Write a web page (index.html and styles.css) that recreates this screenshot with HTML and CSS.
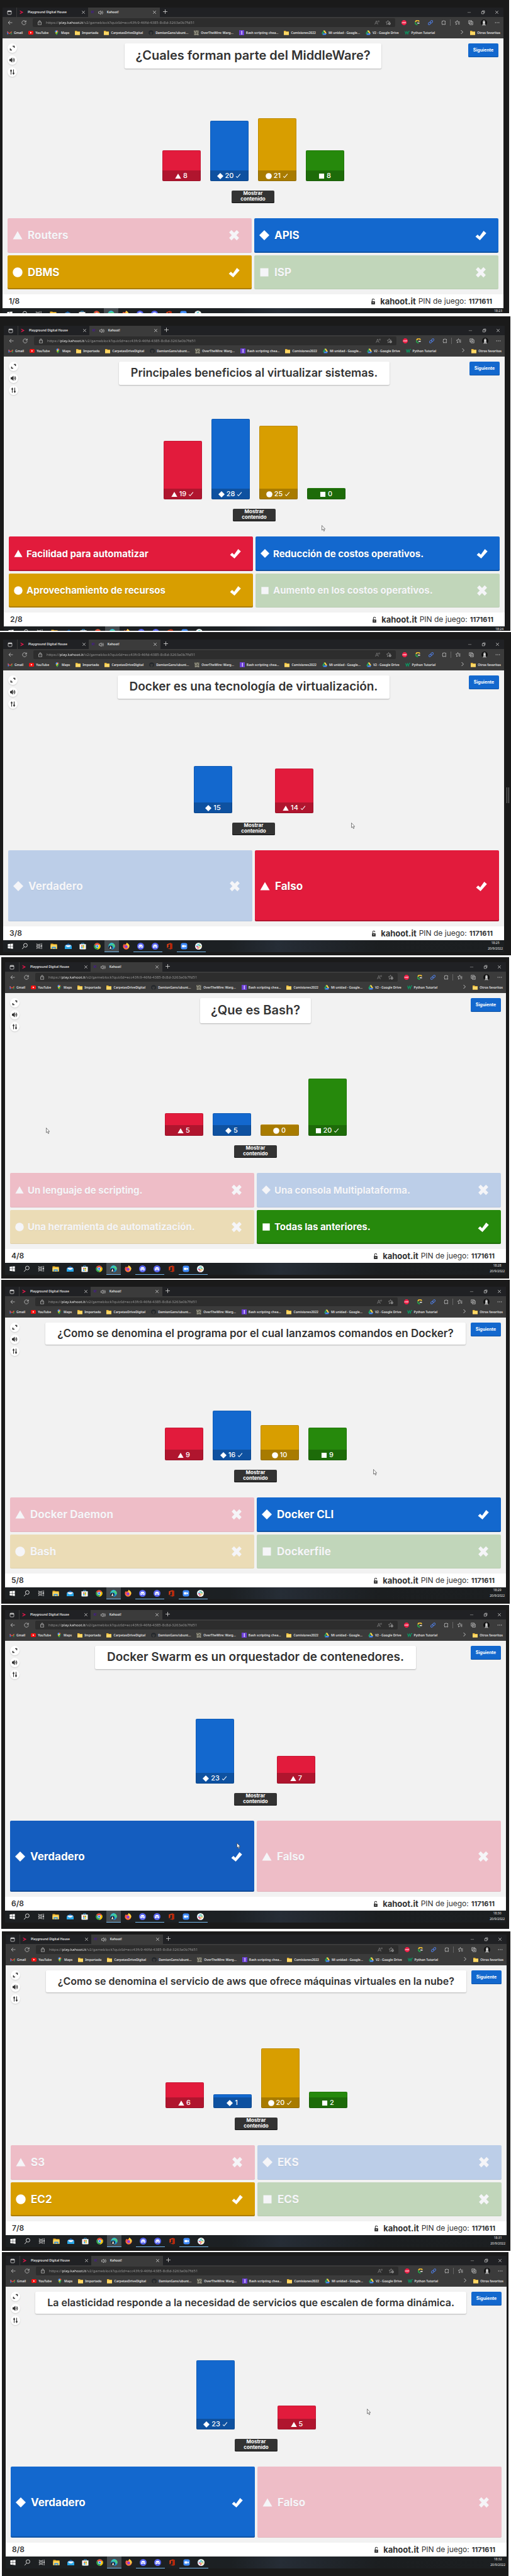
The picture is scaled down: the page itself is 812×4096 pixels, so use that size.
FILE: index.html
```html
<!DOCTYPE html>
<html lang="es">
<head>
<meta charset="utf-8">
<title>Kahoot! - Resultados</title>
<link rel="stylesheet" href="styles.css">
</head>
<body>
<svg class="sprite" aria-hidden="true">
  <symbol id="triangle" viewBox="0 0 32 32"><path d="M16 3 31 29H1z" fill="currentColor"/></symbol>
  <symbol id="diamond" viewBox="0 0 32 32"><path d="M16 0 32 16 16 32 0 16z" fill="currentColor"/></symbol>
  <symbol id="circle" viewBox="0 0 32 32"><circle cx="16" cy="16" r="15.5" fill="currentColor"/></symbol>
  <symbol id="square" viewBox="0 0 32 32"><path d="M3 3h26v26H3z" fill="currentColor"/></symbol>
  <symbol id="tick" viewBox="0 0 32 32"><path d="M1 20 7 14l5.500 5.500L24 3.500 31.500 10 13.500 30z" fill="currentColor"/></symbol>
  <symbol id="cross" viewBox="0 0 32 32"><path d="M8.500 1.500 16 9l7.500-7.500 6.500 6.500L22.500 16 30 23.500 23.500 30.500 16 23 8.500 30.500 2 23.500 9.500 16 2 8z" fill="currentColor"/></symbol>
  <symbol id="check" viewBox="0 0 16 16"><path d="M2 9.500 5.500 13 14 3" fill="none" stroke="currentColor" stroke-width="1.800"/></symbol>
  <symbol id="expand" viewBox="0 0 16 16"><path d="M9 2.500h4.500V7M2.500 9v4.500H7" fill="none" stroke="currentColor" stroke-width="2.600"/></symbol>
  <symbol id="sound" viewBox="0 0 16 16"><path d="M0 5h3l5-4v14l-5-4H0z" fill="currentColor"/><path d="M10 5.500q2 2.500 0 5M11.500 2.500q5 5.500 0 11" fill="none" stroke="currentColor" stroke-width="1.800"/></symbol>
  <symbol id="sliders" viewBox="0 0 16 16"><path d="M4.500 1v14M11.500 1v14" stroke="currentColor" stroke-width="2"/><circle cx="4.500" cy="4.500" r="2.500" fill="currentColor"/><circle cx="11.500" cy="12" r="2.500" fill="currentColor"/></symbol>
  <symbol id="padlock" viewBox="0 0 14 18"><path d="M4 8V4.500a3 3 0 0 1 6 0V5" fill="none" stroke="currentColor" stroke-width="1.800"/><rect x="2" y="8" width="10" height="9" rx="1" fill="currentColor"/><circle cx="7" cy="12" r="1.400" fill="#fff"/></symbol>
  <symbol id="pointer" viewBox="0 0 12 20"><path d="M1 1v15l3.500-3 2.500 6 2.500-1L7 12.500h4.500z" fill="#fff" stroke="#333" stroke-width="1.200"/></symbol>

  <symbol id="pane" viewBox="0 0 16 16"><rect x="2" y="2" width="12" height="12" rx="2" fill="none" stroke="#ddd" stroke-width="1.500"/><path d="M2 3h12v3H2z" fill="#ddd"/></symbol>
  <symbol id="chevron-red" viewBox="0 0 16 16"><path d="m1 1 13 7-13 7 1-4 6-3-6-3z" fill="#e8174c"/></symbol>
  <symbol id="close" viewBox="0 0 16 16"><path d="m3 3 10 10M13 3 3 13" stroke="#e4e4e4" stroke-width="1.800"/></symbol>
  <symbol id="speaker" viewBox="0 0 16 16"><path d="M1 5.500h3L8 2v12L4 10.500H1z" fill="none" stroke="#ddd" stroke-width="1.300"/><path d="M10.500 5q2 3 0 6M13 2.500q4 5.500 0 11" fill="none" stroke="#ddd" stroke-width="1.300"/></symbol>
  <symbol id="plus" viewBox="0 0 16 16"><path d="M8 0v16M0 8h16" stroke="#ddd" stroke-width="1.800"/></symbol>
  <symbol id="minimize" viewBox="0 0 16 16"><path d="M2 8.500h12" stroke="#999" stroke-width="1.500"/></symbol>
  <symbol id="restore" viewBox="0 0 16 16"><path d="M3 5.500h8v8H3zM6 5V2.500h7.500V10H11" fill="none" stroke="#ddd" stroke-width="1.500"/></symbol>
  <symbol id="back" viewBox="0 0 16 16"><path d="M8 2 2 8l6 6M2 8h13" fill="none" stroke="#ccc" stroke-width="1.500"/></symbol>
  <symbol id="reload" viewBox="0 0 16 16"><path d="M14 5.500A6.500 6.500 0 1 0 14.500 9M14.500 1v5h-5" fill="none" stroke="#ccc" stroke-width="1.500"/></symbol>
  <symbol id="lock" viewBox="0 0 16 16"><path d="M3 6h10v8.500H3zM5.500 6V4a2.500 2.500 0 0 1 5 0v2M8 9v2" fill="none" stroke="#bbb" stroke-width="1.500"/></symbol>
  <symbol id="read" viewBox="0 0 16 16"><path d="m1 14 5-12 5 12M3 10h6M11 2q1.500 2 0 4M13.500 1q2.500 3 0 6" fill="none" stroke="#888" stroke-width="1.400"/></symbol>
  <symbol id="star-add" viewBox="0 0 16 16"><path d="m7 1 2 4 4.500.5M7 1 5 5.500.5 6 4 9.500 3 14l4-2" fill="none" stroke="#999" stroke-width="1.400"/><circle cx="11.500" cy="11" r="3.800" fill="#aaa"/><path d="M11.500 9v4M9.500 11h4" stroke="#2d2d2d" stroke-width="1.200"/></symbol>
  <symbol id="abp" viewBox="0 0 16 16"><path d="M5 0h6l5 5v6l-5 5H5l-5-5V5z" fill="#ed1e45"/><path d="M2.500 10V7q1-2 2 0v3m-2-1.500h2M7 6v4h1.500V6zM11 11V6h2v2.500h-2" fill="none" stroke="#fff" stroke-width="1"/></symbol>
  <symbol id="ring" viewBox="0 0 16 16"><path d="M14 5A6 6 0 0 0 2.500 6" fill="none" stroke="#eebd33" stroke-width="4"/><path d="M2 6.500A6 6 0 0 0 9 14" fill="none" stroke="#279c4b" stroke-width="4"/><path d="M7 8h8v3H9z" fill="#eee"/></symbol>
  <symbol id="link" viewBox="0 0 16 16"><g transform="rotate(-42 8 8)" fill="none" stroke="#4f7de0" stroke-width="1.900"><rect x="-.5" y="5" width="9" height="6" rx="3"/><rect x="7.500" y="5" width="9" height="6" rx="3"/></g></symbol>
  <symbol id="puzzle" viewBox="0 0 16 16"><path d="M3 3h3q2-3 4 0h3v4q-3 1 0 3v4h-3q-2-3-4 0H3v-4q-3-2 0-3z" fill="none" stroke="#ccc" stroke-width="1.500"/></symbol>
  <symbol id="favorites" viewBox="0 0 16 16"><path d="m7 1 2 4.500h6M7 1 5 5.500.5 6 4 9.500 3 14l4-2M9 9h6M10 12.500h5" fill="none" stroke="#ccc" stroke-width="1.500"/></symbol>
  <symbol id="collections" viewBox="0 0 16 16"><path d="M4 11H1.500V1.500H11V4M5 5h9.500v9.500H5zM9.750 7v5.500M7 9.750h5.500" fill="none" stroke="#ccc" stroke-width="1.500"/></symbol>
  <symbol id="avatar" viewBox="0 0 16 16"><circle cx="8" cy="8" r="8" fill="#111"/><path d="M5 7q0-5 3-5t3 5v4l2 4H3l2-4z" fill="#aaa"/><path d="M6 6h4v3H6z" fill="#eee"/></symbol>
  <symbol id="dots" viewBox="0 0 16 16"><g fill="#ccc"><circle cx="2.500" cy="8" r="1.300"/><circle cx="8" cy="8" r="1.300"/><circle cx="13.500" cy="8" r="1.300"/></g></symbol>

  <symbol id="gmail" viewBox="0 0 16 16"><path d="M1 13V4h3v9z" fill="#4285f4"/><path d="M12 13V4h3v9z" fill="#34a853"/><path d="M1 3.500 8 9l7-5.500V7l-7 5-7-5z" fill="#ea4335"/></symbol>
  <symbol id="youtube" viewBox="0 0 16 16"><rect y="2" width="16" height="12" rx="3" fill="#f11"/><path d="m6 5 5 3-5 3z" fill="#fff"/></symbol>
  <symbol id="maps" viewBox="0 0 16 16"><path d="M8 0a5 5 0 0 1 5 5q0 4-5 11Q3 9 3 5a5 5 0 0 1 5-5z" fill="#34a853"/><path d="M3.500 7A5 5 0 0 1 8 0v5z" fill="#4285f4"/><path d="M8 0a5 5 0 0 1 5 4L8 6z" fill="#ea4335"/><path d="m4 8 4-3 1 3-3 4z" fill="#fbbc04"/><circle cx="8" cy="5" r="1.700" fill="#fff"/></symbol>
  <symbol id="folder" viewBox="0 0 16 16"><path d="M0 2h6l2 2h8v11H0z" fill="#e9b93b"/><path d="M0 6h16v9H0z" fill="#ffd867"/></symbol>
  <symbol id="github" viewBox="0 0 16 16"><circle cx="8" cy="8" r="7.500" fill="#22262b"/><path d="M5 15v-3q-3-5 0-7l1.500.5h3L11 5q3 2 0 7v3z" fill="#3b3b3b"/></symbol>
  <symbol id="wargame" viewBox="0 0 16 16"><path d="M0 0h16v16H0z" fill="#5c5b50"/><path d="m1 3 5 4 3-5 5 3-3 5 3 5-6-2-5 2 2-6z" fill="none" stroke="#b5b3a2" stroke-width="1.600"/></symbol>
  <symbol id="bash" viewBox="0 0 16 16"><path d="M0 0h16v16H0z" fill="#6b3fd4"/><path d="M7 2h3v12H7z" fill="#d7c9ff"/></symbol>
  <symbol id="drive" viewBox="0 0 16 16"><path d="M5.500 1h5L8 6 3 14.500.5 10z" fill="#1ea362"/><path d="M10.500 1 16 10h-5L5.500 1z" fill="#ffcf48"/><path d="M5.500 10H16l-2.500 5H3z" fill="#4688f4"/></symbol>
  <symbol id="w3" viewBox="0 0 16 16"><path d="m1 3 3 9 3-8 3 8 3-9M13 3h3" fill="none" stroke="#0a9b64" stroke-width="2.200"/></symbol>
  <symbol id="more" viewBox="0 0 16 16"><path d="m5 2 6 6-6 6" fill="none" stroke="#ddd" stroke-width="1.600"/></symbol>

  <symbol id="windows" viewBox="0 0 24 24"><path d="M3 5l8-1v7.500H3zM12 4l9-1v8.500h-9zM3 12.500h8V20l-8-1zM12 12.500h9V21l-9-1z" fill="#fff"/></symbol>
  <symbol id="search" viewBox="0 0 24 24"><circle cx="14" cy="9" r="6.500" fill="none" stroke="#fff" stroke-width="1.800"/><path d="m9.500 14-7 8" stroke="#fff" stroke-width="1.800"/></symbol>
  <symbol id="taskview" viewBox="0 0 24 24"><path d="M3 3v3h12V3M3 21v-3h12v3M3 9.500h12v5H3zM20 2v20" fill="none" stroke="#ddd" stroke-width="1.800"/><path d="M18.500 9h3v4h-3z" fill="#fff"/></symbol>
  <symbol id="explorer" viewBox="0 0 24 24"><path d="M1 3h8l2 2h12v16H1z" fill="#f0b429"/><path d="M1 8h22v13H1z" fill="#ffd75e"/><path d="M5 14h14v7h-4v-3H9v3H5z" fill="#3292e3"/></symbol>
  <symbol id="mail" viewBox="0 0 24 24"><path d="M0 10 12 2l12 8v12H0z" fill="#0c59a4"/><path d="M3 8h18v8H3z" fill="#e8f2fb"/><path d="m0 10 12 7 12-7v12H0z" fill="#28a8ea"/></symbol>
  <symbol id="store" viewBox="0 0 24 24"><path d="M8 6V2h8v4" fill="none" stroke="#3ca9ee" stroke-width="2"/><path d="M1 5h22v15q0 3-3 3H4q-3 0-3-3z" fill="#f5f5f5"/><path d="M7 9h4.500v4.500H7z" fill="#f25022"/><path d="M12.500 9H17v4.500h-4.500z" fill="#7fba00"/><path d="M7 14.500h4.500V19H7z" fill="#00a4ef"/><path d="M12.500 14.500H17V19h-4.500z" fill="#ffb900"/></symbol>
  <symbol id="chrome" viewBox="0 0 24 24"><circle cx="12" cy="12" r="11.500" fill="#34a853"/><path d="M2 6.500A11.500 11.500 0 0 1 22 6.500L12 12z" fill="#ea4335"/><path d="M12 7h10.300A11.500 11.500 0 0 1 12 23.500l4.500-9z" fill="#fbbc05"/><circle cx="12" cy="12" r="5.500" fill="#fff"/><circle cx="12" cy="12" r="4.200" fill="#4285f4"/></symbol>
  <symbol id="edge" viewBox="0 0 24 24"><circle cx="12" cy="12" r="11.500" fill="#1c8fd6"/><path d="M1 10A11.500 11.500 0 0 1 23.500 12q-1 5-7 5 4-8-6-9-6 0-9.500 2z" fill="#4fd07a"/><path d="M5 3.500Q14-3 21 5.500q-8-3-16 3z" fill="#35c1d0"/><circle cx="8" cy="17" r="6.500" fill="#15181b"/><path d="M6 16q0-4 2-4t2 4l2 5H4z" fill="#ddd"/></symbol>
  <symbol id="firefox" viewBox="0 0 24 24"><path d="M12 4q2-2 1-4 9 4 10 11.500A11 11 0 1 1 1 13Q1 7 5 3q0 3 2 4z" fill="#ff7139"/><path d="M13 0q9 4 10 11-2 8-8 8 4-6-2-11z" fill="#ffd23c"/><circle cx="12" cy="13.500" r="5" fill="#8a3fe0"/><path d="M2 10q3-3 9 0-4 1-4 5-4 0-5-5z" fill="#ff3a5c"/></symbol>
  <symbol id="discord" viewBox="0 0 24 24"><circle cx="12" cy="12" r="12" fill="#5865f2"/><path d="M7 7q5-2 10 0 3 5 2.500 9-2 2-4 2l-1-2h-5l-1 2q-2 0-4-2Q4 12 7 7z" fill="#fff"/><circle cx="9.200" cy="12.500" r="1.600" fill="#5865f2"/><circle cx="14.800" cy="12.500" r="1.600" fill="#5865f2"/></symbol>
  <symbol id="office" viewBox="0 0 24 24"><path d="M3 5 15 1l6 2v18l-6 2-12-4 11 1V5L8 6.500v9L3 18z" fill="#e33d14"/><path d="m15 1 6 2v18l-6 2z" fill="#b8260a"/></symbol>
  <symbol id="zoom" viewBox="0 0 24 24"><rect x="1" y="1" width="22" height="22" rx="6" fill="#3f8cff"/><rect x="5" y="8" width="9.500" height="8" rx="1.500" fill="#fff"/><path d="m15.500 10.500 4-2.500v8l-4-2.500z" fill="#fff"/></symbol>
  <symbol id="slack" viewBox="0 0 24 24"><circle cx="12" cy="12" r="12" fill="#f5f5f5"/><g stroke-width="3" stroke-linecap="round"><path d="M10 5.500V10M4.500 10H6" stroke="#36c5f0"/><path d="M14 10h4.500M14 4.500V6" stroke="#2eb67d"/><path d="M14 14v4.500M18 14h1.500" stroke="#ecb22e"/><path d="M5.500 14H10M10 18v1.500" stroke="#e01e5a"/></g></symbol>
</svg>
<main class="deck" id="deck"></main>
<script src="deck.js"></script>
</body>
</html>
```
FILE: styles.css
```css
* { box-sizing: border-box; }
body {
  margin: 0;
  background: #fff;
  color: #333;
  font-family: Inter, "Liberation Sans", sans-serif;
}
button {
  border: 0;
  padding: 0;
  background: none;
  color: inherit;
  font: inherit;
}
a { color: inherit; text-decoration: none; }
svg { display: block; flex: none; }
.sprite { position: absolute; width: 0; height: 0; }

/* Slide frame */
.slide { position: relative; background: #1a1a1a; }
.handle {
  position: absolute;
  top: 48%;
  right: 3px;
  width: 4px;
  height: 25px;
  border: solid #777;
  border-width: 0 1px;
}

/* Browser chrome */
.chrome {
  font: 600 5px/9px "Noto Sans", "Liberation Sans", sans-serif;
  color: #e4e4e4;
  background: #3b3b3b;
}
.i7 { width: 7px; height: 7px; }
.i8 { width: 8px; height: 8px; }
.i10 { width: 10px; height: 10px; }
.tabs {
  display: flex;
  align-items: center;
  height: 15px;
  background: #202124;
}
.tab-pane { padding: 0 7px; }
.tab {
  display: flex;
  align-items: center;
  height: 15px;
  gap: 6px;
  padding: 0 4px;
}
.tab button { margin-left: auto; }
.tab-first { width: 114px; border-left: 1px solid #3b3b3b; }
.tab-active { width: 114px; padding: 0 5px; background: #3b3b3b; }
.tab-brand { color: #46178f; font-weight: 700; }
.tab-new { padding-left: 5px; }
.window-controls { display: flex; gap: 15px; margin-left: auto; padding-right: 7px; }
.toolbar { display: flex; align-items: center; height: 18px; }
.nav { display: flex; gap: 14px; padding: 0 10px 0 8px; }
.address {
  display: flex;
  flex: 1;
  align-items: center;
  gap: 6px;
  height: 14px;
  padding: 0 7px;
  border-radius: 2px;
  background: #2d2d2d;
}
.address input {
  flex: 1;
  min-width: 0;
  height: 12px;
  padding: 0;
  border: 0;
  outline: 0;
  font: 400 6px/12px "Noto Sans", "Liberation Sans", sans-serif;
  color: transparent;
  background: linear-gradient(90deg, #999 21px, #fff 21px, #fff 58px, #999 58px);
  -webkit-background-clip: text;
  background-clip: text;
}
.address-tools { display: flex; gap: 10px; }
.extensions { display: flex; padding-left: 3px; }
.extensions button {
  display: flex;
  align-items: center;
  justify-content: center;
  width: 21px;
  height: 10px;
}
.extensions .split { border-left: 1px solid #666; width: 22px; }
.bookmarks {
  display: flex;
  align-items: center;
  gap: 9px;
  height: 16px;
  padding: 0 5px 2px 7px;
  white-space: nowrap;
}
.bookmarks a { display: flex; align-items: center; gap: 3px; }
.bookmarks .more { margin-left: auto; }

/* Quiz stage */
.stage {
  position: relative;
  display: flex;
  flex-direction: column;
  min-height: 407px;
  padding: 8px;
  background: #f2f2f2;
}
.top {
  display: grid;
  grid-template-columns: minmax(0, 1fr) auto minmax(56px, 1fr);
  align-items: start;
}
.tools { display: grid; gap: 4px; justify-content: start; }
.tools button {
  display: grid;
  place-items: center;
  width: 15px;
  height: 15px;
  border-radius: 50%;
  background: #fff;
  box-shadow: 0 1px 2px rgba(0, 0, 0, .15);
}
.tools svg { width: 9px; height: 9px; }
.question {
  margin: 0;
  padding: 7px 19px 8px;
  border-radius: 2px;
  background: #fff;
  box-shadow: 0 1px 2px rgba(0, 0, 0, .25);
  font-weight: 600;
  line-height: 24px;
  white-space: nowrap;
}
.question-xl { font-size: 20px; padding: 7px 17px 9px; }
.question-lg { font-size: 19px; line-height: 22px; }
.question-md { font-size: 18px; line-height: 22px; }
.question-sm { font-size: 17px; line-height: 20px; }
.question-xs { font-size: 16px; line-height: 20px; }
.next {
  justify-self: end;
  width: 48px;
  height: 22px;
  padding-bottom: 2px;
  border-radius: 2px;
  background: #1368ce;
  box-shadow: inset 0 -1px #0f53a5;
  color: #fff;
  font-size: 7px;
  font-weight: 700;
}
.chart {
  display: flex;
  flex: 1;
  align-items: flex-end;
  justify-content: center;
  gap: 15px;
}
.chart-pair { gap: 68px; }
.bar {
  display: flex;
  align-items: flex-end;
  width: 61px;
  border-radius: 2px;
  overflow: hidden;
  box-shadow: inset 0 0 0 1px rgba(0, 0, 0, .12);
}
.bar span {
  display: flex;
  flex: 1;
  align-items: center;
  justify-content: center;
  gap: 3px;
  height: 17px;
  background: rgba(0, 0, 0, .22);
  color: #fff;
  font-size: 11px;
  font-weight: 500;
  line-height: 17px;
}
.bar svg { width: 10px; height: 10px; }
.bar svg + svg { width: 9px; height: 9px; }
.red { background: #e21b3c; }
.blue { background: #1368ce; }
.yellow { background: #d89e00; }
.green { background: #26890c; }
.show {
  align-self: center;
  width: 68px;
  margin: 15px 0 24px;
  padding-bottom: 2px;
  border-radius: 2px;
  background: #333;
  box-shadow: inset 0 -1px #111;
  color: #fff;
  font-size: 8px;
  font-weight: 700;
  line-height: 9px;
}
.answers {
  display: grid;
  grid-template-columns: 1fr 1fr;
  grid-auto-rows: 1fr;
  gap: 4px;
  min-height: 113px;
}
.answer {
  display: flex;
  align-items: center;
  gap: 8px;
  padding: 0 19px 0 8px;
  border-radius: 2px;
  box-shadow: inset 0 -2px rgba(0, 0, 0, .2);
  color: #fff;
  font-size: 17px;
  font-weight: 700;
  text-align: left;
  text-shadow: 0 1px 1px rgba(0, 0, 0, .2);
}
.answer span { flex: 1; }
.answer svg { width: 16px; height: 16px; }
.answer svg:last-child { width: 18px; height: 18px; }
.answers-long .answer { gap: 6px; font-size: 15px; }
.answers-long .answer svg:first-child { width: 14px; height: 14px; }
.wrong {
  color: #f5f5f8;
  box-shadow: inset 0 -1px rgba(0, 0, 0, .05);
  text-shadow: 0 1px 1px rgba(0, 0, 0, .06);
}
.wrong.red { background: #eebdc7; }
.wrong.blue { background: #bccee8; }
.wrong.yellow { background: #ebdcb6; }
.wrong.green { background: #c1d6ba; }
.hover.blue { background: #145dbf; }
.pointer { position: absolute; width: 6px; height: 10px; }

.status {
  display: flex;
  align-items: center;
  gap: 4px;
  height: 22px;
  padding: 0 18px 0 10px;
  background: #fff;
  font-size: 12px;
  line-height: 22px;
}
.status .count { margin-right: auto; font-weight: 600; }
.status .site { font-size: 13px; }
.status .pin { font-size: 11px; }
.status svg { width: 8px; height: 11px; margin-right: 3px; }

/* Desktop task bar */
.taskbar {
  display: flex;
  overflow: hidden;
  background: linear-gradient(90deg, #1d2022, #1c2023 45%, #262d36 55%, #1b1e20 75%, #1c1f21);
}
.taskbar button {
  display: grid;
  place-items: center;
  width: 23px;
  height: 19px;
}
.taskbar svg { width: 11px; height: 11px; }
.taskbar .open { box-shadow: inset 0 -1px #76b9ed; }
.taskbar .current { background: #464c50; }
.clock {
  margin-left: auto;
  padding-right: 2px;
  color: #e8e8e8;
  font: 400 5px/9px "Noto Sans", "Liberation Sans", sans-serif;
  text-align: center;
}
.clock time { display: block; }
```
FILE: deck.js
```js
const icon = (name, cls = 'i8') => `<svg class="${cls}" aria-hidden="true"><use href="#${name}"/></svg>`;

const SHAPES = { red: 'triangle', blue: 'diamond', yellow: 'circle', green: 'square' };

const BOOKMARKS = [
  ['gmail', 'Gmail'], ['youtube', 'YouTube'], ['maps', 'Maps'], ['folder', 'Importado'],
  ['folder', 'CarpetasDriveDigital'], ['github', 'DamionGans/ubunt...'],
  ['wargame', 'OverTheWire: Warg...'], ['bash', 'Bash scripting chea...'],
  ['folder', 'Comisiones2022'], ['drive', 'Mi unidad - Google...'],
  ['drive', 'V2 - Google Drive'], ['w3', 'Python Tutorial'],
];

const TASKS = [
  ['windows', ''], ['search', ''], ['taskview', ''], ['explorer', ''], ['mail', ''], ['store', ''],
  ['chrome', ''], ['edge', 'open current'], ['firefox', ''], ['discord', 'open'],
  ['discord', 'open'], ['office', ''], ['zoom', 'open'], ['slack', 'open'],
];

// bars: [colour, votes, height, correct]; answers: [colour, text, correct]
// frame: dark border [top, right, bottom, left]; edge: page margin [right, bottom, left]
const SLIDES = [
  { title: '¿Cuales forman parte del MiddleWare?', size: 'xl', time: '18:23', task: 8,
    frame: [12, 9, 0, 4], edge: [3, 5, 0],
    bars: [['red', 8, 49], ['blue', 20, 96, 1], ['yellow', 21, 100, 1], ['green', 8, 49]],
    answers: [['red', 'Routers'], ['blue', 'APIS', 1], ['yellow', 'DBMS', 1], ['green', 'ISP']] },
  { title: 'Principales beneficios al virtualizar sistemas.', size: 'md', time: '18:24', task: 7,
    frame: [15, 9, 0, 6], edge: [1, 2, 0], long: true, pointer: [505, 268],
    bars: [['red', 19, 93, 1], ['blue', 28, 128, 1], ['yellow', 25, 117, 1], ['green', 0, 18]],
    answers: [['red', 'Facilidad para automatizar', 1], ['blue', 'Reducción de costos operativos.', 1],
      ['yellow', 'Aprovechamiento de recursos', 1], ['green', 'Aumento en los costos operativos.']] },
  { title: 'Docker es una tecnología de virtualización.', size: 'lg', time: '18:25', task: 19,
    frame: [12, 11, 5, 5], edge: [0, 3, 0], pointer: [553, 242], handle: true,
    bars: [['blue', 15, 75], ['red', 14, 71, 1]],
    answers: [['blue', 'Verdadero'], ['red', 'Falso', 1]] },
  { title: '¿Que es Bash?', size: 'xl', time: '18:28', task: 19,
    frame: [8, 5, 6, 6], edge: [3, 2, 2], long: true, pointer: [65, 214],
    bars: [['red', 5, 36], ['blue', 5, 36], ['yellow', 0, 18], ['green', 20, 91, 1]],
    answers: [['red', 'Un lenguaje de scripting.'], ['blue', 'Una consola Multiplataforma.'],
      ['yellow', 'Una herramienta de automatización.'], ['green', 'Todas las anteriores.', 1]] },
  { title: '¿Como se denomina el programa por el cual lanzamos comandos en Docker?', size: 'sm',
    time: '18:29', task: 19, frame: [11, 6, 7, 6], edge: [2, 2, 2], pointer: [585, 241],
    bars: [['red', 9, 52], ['blue', 16, 79, 1], ['yellow', 10, 56], ['green', 9, 52]],
    answers: [['red', 'Docker Daemon'], ['blue', 'Docker CLI', 1], ['yellow', 'Bash'], ['green', 'Dockerfile']] },
  { title: 'Docker Swarm es un orquestador de contenedores.', size: 'lg', time: '18:30', task: 19,
    frame: [8, 5, 10, 6], edge: [3, 4, 2], pointer: [368, 321], hover: 0,
    bars: [['blue', 23, 103, 1], ['red', 7, 44]],
    answers: [['blue', 'Verdadero', 1], ['red', 'Falso']] },
  { title: '¿Como se denomina el servicio de aws que ofrece máquinas virtuales en la nube?', size: 'xs',
    time: '18:31', task: 19, frame: [5, 6, 6, 6], edge: [1, 2, 3],
    bars: [['red', 6, 41], ['blue', 1, 22], ['yellow', 20, 95, 1], ['green', 2, 26]],
    answers: [['red', 'S3'], ['blue', 'EKS'], ['yellow', 'EC2', 1], ['green', 'ECS']] },
  { title: 'La elasticidad responde a la necesidad de servicios que escalen de forma dinámica.', size: 'xs',
    time: '18:32', task: 19, frame: [6, 3, 12, 6], edge: [4, 0, 3], pointer: [574, 194],
    bars: [['blue', 23, 110, 1], ['red', 5, 38]],
    answers: [['blue', 'Verdadero', 1], ['red', 'Falso']] },
];

const button = (name, label, cls = 'i8') =>
  `<button type="button" aria-label="${label}">${icon(name, cls)}</button>`;

const chrome = n => `
<div class="chrome">
  <div class="tabs">
    <span class="tab-pane">${icon('pane')}</span>
    <div class="tab tab-first">${icon('chevron-red', 'i7')}<span>Playground Digital House</span>${button('close', 'Cerrar', 'i7')}</div>
    <div class="tab tab-active"><span class="tab-brand">K!</span>${icon('speaker')}<span>Kahoot!</span>${button('close', 'Cerrar', 'i7')}</div>
    <span class="tab-new">${button('plus', 'Nueva pestaña', 'i7')}</span>
    <div class="window-controls">${button('minimize', 'Minimizar', 'i7')}${button('restore', 'Restaurar', 'i7')}${button('close', 'Cerrar ventana', 'i7')}</div>
  </div>
  <div class="toolbar">
    <div class="nav">${button('back', 'Atrás')}${button('reload', 'Recargar')}</div>
    <div class="address">
      ${icon('lock')}
      <input type="text" id="url-${n}" aria-label="Dirección" value="https://play.kahoot.it/v2/gameblock?quizId=ecc43fc9-46fd-4385-8c8d-3263a0b7fd51">
      <div class="address-tools">${button('read', 'Leer en voz alta')}${button('star-add', 'Agregar a favoritos')}</div>
    </div>
    <div class="extensions">
      ${button('abp', 'Adblock Plus')}${button('ring', 'Extensión')}${button('link', 'Enlace')}${button('puzzle', 'Extensiones')}
      ${button('favorites', 'Favoritos').replace('<button', '<button class="split"')}${button('collections', 'Colecciones')}${button('avatar', 'Perfil', 'i10')}${button('dots', 'Menú')}
    </div>
  </div>
  <nav class="bookmarks">
    ${BOOKMARKS.map(([i, t]) => `<a href="#">${icon(i)}${t}</a>`).join('')}
    <span class="more">${button('more', 'Más favoritos')}</span>
    <a href="#">${icon('folder')}Otros favoritos</a>
  </nav>
</div>`;

const bar = ([c, votes, h, ok]) =>
  `<div class="bar ${c}" style="height:${h}px"><span>${icon(SHAPES[c], '')}${votes}${ok ? icon('check', '') : ''}</span></div>`;

const answer = (slide) => ([c, text, ok], i) =>
  `<button type="button" class="answer ${c}${ok ? '' : ' wrong'}${slide.hover === i ? ' hover' : ''}">${icon(SHAPES[c], '')}<span>${text}</span>${icon(ok ? 'tick' : 'cross', '')}</button>`;

document.getElementById('deck').innerHTML = SLIDES.map((s, i) => `
<section class="slide" style="padding:${s.frame.join('px ')}px;margin:0 ${s.edge.join('px ')}px">
  ${chrome(i + 1)}
  <div class="stage">
    <div class="top">
      <div class="tools">${button('expand', 'Pantalla completa')}${button('sound', 'Sonido')}${button('sliders', 'Ajustes')}</div>
      <h2 class="question question-${s.size}">${s.title}</h2>
      <button type="button" class="next">Siguiente</button>
    </div>
    <div class="chart${s.bars.length === 2 ? ' chart-pair' : ''}">${s.bars.map(bar).join('')}</div>
    <button type="button" class="show">Mostrar<br>contenido</button>
    <div class="answers${s.long ? ' answers-long' : ''}">${s.answers.map(answer(s)).join('')}</div>
    ${s.pointer ? `<svg class="pointer" style="left:${s.pointer[0]}px;top:${s.pointer[1]}px" aria-hidden="true"><use href="#pointer"/></svg>` : ''}
  </div>
  <div class="status">
    <span class="count">${i + 1}/8</span>
    ${icon('padlock', '')}<b class="site">kahoot.it</b><span>PIN de juego:</span><b class="pin">1171611</b>
  </div>
  <div class="taskbar" style="height:${s.task}px">
    ${TASKS.map(([t, cls]) => `<button type="button" class="${cls}" aria-label="${t}">${icon(t, '')}</button>`).join('')}
    <div class="clock"><time>${s.time}</time>${s.task > 10 ? '<time>20/9/2022</time>' : ''}</div>
  </div>
  ${s.handle ? '<span class="handle"></span>' : ''}
</section>`).join('');
```
